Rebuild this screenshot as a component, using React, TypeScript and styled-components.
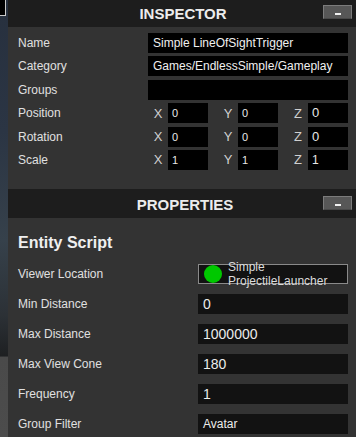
import React from "react";
import styled, { createGlobalStyle } from "styled-components";

const GlobalStyle = createGlobalStyle`
  html, body { margin: 0; padding: 0; background: #333; }
  body { font-family: "Liberation Sans", Arial, sans-serif; }
  * { box-sizing: border-box; }
`;

const Page = styled.div`
  display: flex;
  width: 356px;
  height: 437px;
  overflow: hidden;
`;

const SceneStrip = styled.div`
  flex: none;
  width: 8px;
  background: linear-gradient(
    to bottom,
    #27303e 0%,
    #2b3544 30%,
    #36414b 55%,
    #2c3136 72%,
    #1e2022 81.4%,
    #4a4a4a 81.8%,
    #4c4c4c 100%
  );
`;

const ScenePreview = styled.div`
  width: 6px;
  height: 16px;
  background: #000;
  border-right: 1px solid #c8c8c8;
  border-bottom: 1px solid #c8c8c8;
`;

const Panel = styled.div`
  flex: 1;
  display: flex;
  flex-direction: column;
  background: #333333;
  color: #e2e2e2;
`;

const SectionHeader = styled.div<{ $height: number; $padBottom: number }>`
  display: grid;
  grid-template-columns: 1fr auto 1fr;
  align-items: center;
  height: ${(p) => p.$height}px;
  padding-bottom: ${(p) => p.$padBottom}px;
  background: #1d1d1d;
`;

const HeaderTitle = styled.div<{ $shift: number }>`
  grid-column: 2;
  font-size: 15px;
  font-weight: bold;
  color: #ececec;
  transform: translate(${(p) => p.$shift}px, 1px);
`;

const CollapseButton = styled.div`
  grid-column: 3;
  justify-self: end;
  margin-right: 4px;
  width: 29px;
  height: 14px;
  display: flex;
  align-items: center;
  justify-content: center;
  background: #575757;
  border: 1px solid #7c7c7c;
  border-bottom-color: #484848;
`;

const Dash = styled.span`
  display: block;
  width: 6px;
  height: 2px;
  margin-top: 3px;
  background: #f0f0f0;
`;

const InspectorBody = styled.div`
  display: grid;
  grid-template-columns: 130px 1fr;
  row-gap: 3.4px;
  padding: 6px 8px 19px 10px;
`;

const Label = styled.div`
  font-size: 12px;
  color: #e0e0e0;
  height: 20px;
  line-height: 20px;
  white-space: nowrap;
`;

const TextBox = styled.div`
  height: 20px;
  line-height: 20px;
  padding-left: 5px;
  background: #000;
  color: #f0f0f0;
  font-size: 12px;
  white-space: nowrap;
  overflow: hidden;
`;

const VectorGroup = styled.div`
  display: grid;
  grid-template-columns: repeat(3, 60px);
  column-gap: 10px;
`;

const AxisCell = styled.div`
  display: grid;
  grid-template-columns: 20px 40px;
  align-items: center;
`;

const AxisLabel = styled.span`
  text-align: center;
  font-size: 13px;
  color: #d0d0d0;
`;

const AxisBox = styled.div<{ $size: number }>`
  height: 20px;
  line-height: 20px;
  padding-left: 4px;
  background: #000;
  color: #e8e8e8;
  font-size: ${(p) => p.$size}px;
`;

const PropertiesBody = styled.div`
  display: flex;
  flex-direction: column;
  padding: 16px 8px 0 10px;
`;

const ScriptTitle = styled.div`
  font-size: 16px;
  font-weight: bold;
  line-height: 18px;
  color: #efefef;
  margin-bottom: 12px;
`;

const PropGrid = styled.div`
  display: grid;
  grid-template-columns: 180px 1fr;
  row-gap: 10px;
`;

const PropBox = styled.div<{ $size: number }>`
  height: 20px;
  line-height: 20px;
  padding-left: 5px;
  background: #121212;
  color: #ececec;
  font-size: ${(p) => p.$size}px;
`;

const EntityPicker = styled.div`
  height: 20px;
  display: flex;
  align-items: center;
  gap: 6px;
  padding-left: 5px;
  background: #121212;
  border: 1px solid #8a8a8a;
`;

const StatusDot = styled.span`
  flex: none;
  width: 18px;
  height: 18px;
  border-radius: 50%;
  background: #00c800;
`;

const PickerText = styled.span`
  font-size: 12px;
  line-height: 13.5px;
  color: #dcdcdc;
  white-space: nowrap;
  transform: translateY(1px);
`;

type Vec = { label: string; values: [string, string, string]; zSize: number };

const vectors: Vec[] = [
  { label: "Position", values: ["0", "0", "0"], zSize: 13 },
  { label: "Rotation", values: ["0", "0", "0"], zSize: 13 },
  { label: "Scale", values: ["1", "1", "1"], zSize: 12 },
];

const props: { label: string; value: string; size: number }[] = [
  { label: "Min Distance", value: "0", size: 14 },
  { label: "Max Distance", value: "1000000", size: 14 },
  { label: "Max View Cone", value: "180", size: 14 },
  { label: "Frequency", value: "1", size: 14 },
  { label: "Group Filter", value: "Avatar", size: 12 },
];

export default function App() {
  return (
    <>
      <GlobalStyle />
      <Page>
        <SceneStrip>
          <ScenePreview />
        </SceneStrip>
        <Panel>
          <SectionHeader $height={27} $padBottom={3}>
            <HeaderTitle $shift={1}>INSPECTOR</HeaderTitle>
            <CollapseButton>
              <Dash />
            </CollapseButton>
          </SectionHeader>
          <InspectorBody>
            <Label>Name</Label>
            <TextBox>Simple LineOfSightTrigger</TextBox>
            <Label>Category</Label>
            <TextBox>Games/EndlessSimple/Gameplay</TextBox>
            <Label>Groups</Label>
            <TextBox />
            {vectors.map((v) => (
              <React.Fragment key={v.label}>
                <Label>{v.label}</Label>
                <VectorGroup>
                  {(["X", "Y", "Z"] as const).map((axis, i) => (
                    <AxisCell key={axis}>
                      <AxisLabel>{axis}</AxisLabel>
                      <AxisBox $size={axis === "Z" ? v.zSize : 11}>{v.values[i]}</AxisBox>
                    </AxisCell>
                  ))}
                </VectorGroup>
              </React.Fragment>
            ))}
          </InspectorBody>
          <SectionHeader $height={29} $padBottom={0}>
            <HeaderTitle $shift={3}>PROPERTIES</HeaderTitle>
            <CollapseButton>
              <Dash />
            </CollapseButton>
          </SectionHeader>
          <PropertiesBody>
            <ScriptTitle>Entity Script</ScriptTitle>
            <PropGrid>
              <Label>Viewer Location</Label>
              <EntityPicker>
                <StatusDot />
                <PickerText>
                  Simple
                  <br />
                  ProjectileLauncher
                </PickerText>
              </EntityPicker>
              {props.map((p) => (
                <React.Fragment key={p.label}>
                  <Label>{p.label}</Label>
                  <PropBox $size={p.size}>{p.value}</PropBox>
                </React.Fragment>
              ))}
            </PropGrid>
          </PropertiesBody>
        </Panel>
      </Page>
    </>
  );
}
